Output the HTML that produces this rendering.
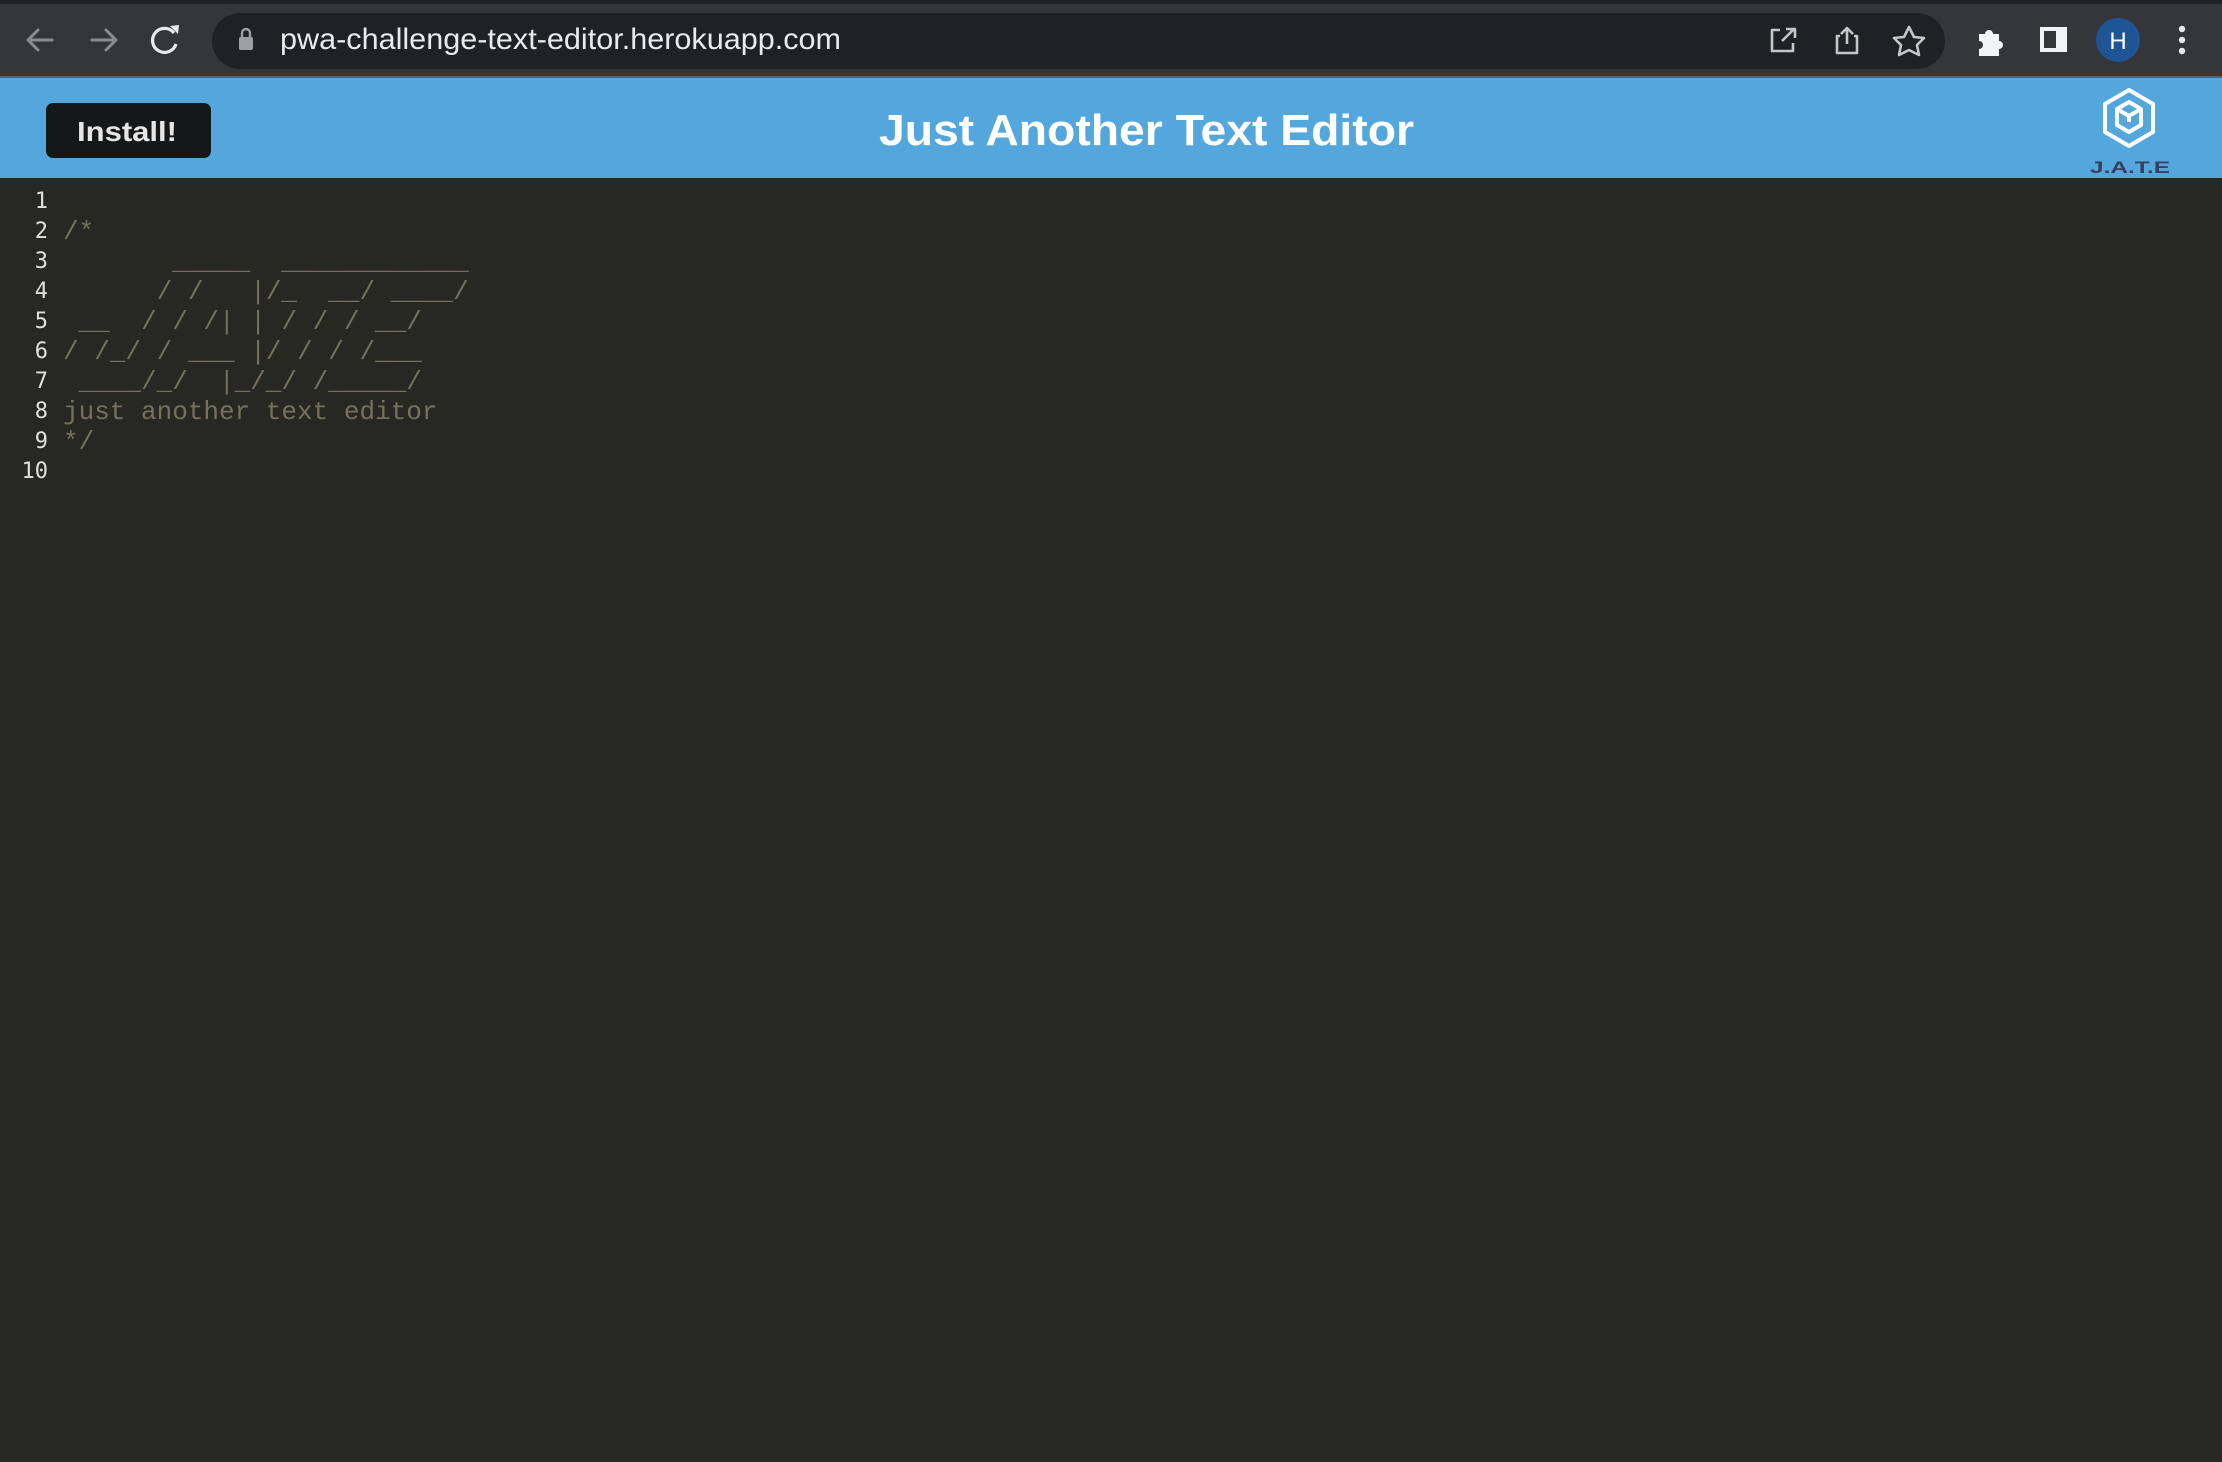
<!DOCTYPE html>
<html><head><meta charset="utf-8"><style>
html,body{margin:0;padding:0;width:2222px;height:1462px;overflow:hidden;background:#272822;}
.abs{position:absolute;}
pre{margin:0;font-family:"Liberation Mono",monospace;font-size:26px;line-height:30px;}
</style></head><body>
<div class="abs" style="left:0;top:0;width:2222px;height:77px;background:#35363a;"></div>
<div class="abs" style="left:0;top:0;width:2222px;height:4px;background:#202124;"></div>
<div class="abs" style="left:0;top:76px;width:2222px;height:2px;background:#5f6368;"></div>
<div class="abs" style="left:212px;top:13px;width:1733px;height:56px;border-radius:28px;background:#202124;"></div>
<svg class="abs" style="left:0;top:0" width="2222" height="78">
 <g fill="none" stroke="#8a8b8e" stroke-width="3" stroke-linecap="round" stroke-linejoin="round">
  <path d="M52 40H28M38 30L28 40L38 50"/>
  <path d="M92 40H116M106 30L116 40L106 50"/>
 </g>
 <g fill="none" stroke="#e8eaed" stroke-width="3.2">
  <path d="M174 33 A12 12 0 1 0 176 44"/>
 </g>
 <path d="M170 26 L179 25 L178 34 Z" fill="#e8eaed"/>
 <rect x="239" y="37" width="14" height="13" rx="2" fill="#9aa0a6"/>
 <path d="M242 38v-5a4 4 0 0 1 8 0v5" fill="none" stroke="#9aa0a6" stroke-width="2.4"/>
 <text x="280" y="49" font-family="Liberation Sans,sans-serif" font-size="30" fill="#e8eaed" textLength="561" lengthAdjust="spacingAndGlyphs">pwa-challenge-text-editor.herokuapp.com</text>
 <g fill="none" stroke="#c4c7c5" stroke-width="2.6" stroke-linejoin="round">
  <path d="M1780 30H1772V51H1793V43"/>
  <path d="M1782 41L1794 29M1786 29H1795V38"/>
  <path d="M1840 36H1837V53H1857V36H1854M1847 44V28M1841 34L1847 28L1853 34"/>
  <path d="M1909 27L1914 37L1924 38L1917 45L1919 55L1909 50L1899 55L1901 45L1894 38L1904 37Z"/>
 </g>
 <path d="M1979 34h6a4 4 0 0 1 8 0h6v7a4 4 0 0 1 0 8v7h-20v-7a4 4 0 0 0 0-8z" fill="#f1f3f4"/>
 <rect x="2040" y="27" width="27" height="25" fill="#f1f3f4"/>
 <rect x="2044" y="31" width="12" height="17" fill="#35363a"/>
 <circle cx="2118" cy="40" r="22" fill="#1f5597"/>
 <text x="2118" y="49" text-anchor="middle" font-family="Liberation Sans,sans-serif" font-size="24" fill="#fff">H</text>
 <g fill="#e8eaed"><circle cx="2182" cy="29" r="3.2"/><circle cx="2182" cy="40" r="3.2"/><circle cx="2182" cy="51" r="3.2"/></g>
</svg>
<div class="abs" style="left:0;top:78px;width:2222px;height:100px;background:#53a7dd;"></div>
<div class="abs" style="left:46px;top:103px;width:165px;height:55px;border-radius:7px;background:#161718;"></div>
<svg class="abs" style="left:0;top:78px" width="2222" height="100">
 <text x="77" y="63" font-family="Liberation Sans,sans-serif" font-weight="bold" font-size="28" fill="#e6e6e6" textLength="100" lengthAdjust="spacingAndGlyphs">Install!</text>
 <text x="879" y="67" font-family="Liberation Sans,sans-serif" font-weight="bold" font-size="44" fill="#fff" textLength="535" lengthAdjust="spacingAndGlyphs">Just Another Text Editor</text>
 <g fill="none" stroke="#fff" stroke-width="4" stroke-linejoin="round">
  <path d="M2129 12L2153 26V54L2129 68L2105 54V26Z"/>
  <path d="M2129 24L2141 31V47L2129 54L2117 47V31Z"/>
  <path d="M2117 31L2129 38L2141 31M2129 38V44"/>
 </g>
 <text x="2130" y="95" text-anchor="middle" font-family="Liberation Sans,sans-serif" font-weight="bold" font-size="17" fill="#3b3f5c" textLength="80" lengthAdjust="spacingAndGlyphs">J.A.T.E</text>
</svg>
<pre class="abs" style="left:0;top:187px;width:48px;text-align:right;font-family:'DejaVu Sans Mono',monospace;font-size:22px;color:#e0e0e0;">1
2
3
4
5
6
7
8
9
10</pre>
<pre class="abs" style="left:63px;top:217px;color:#75715e;">/*
       _____  ____________
      / /   |/_  __/ ____/
 __  / / /| | / / / __/
/ /_/ / ___ |/ / / /___
 ____/_/  |_/_/ /_____/
just another text editor
*/</pre>
</body></html>
